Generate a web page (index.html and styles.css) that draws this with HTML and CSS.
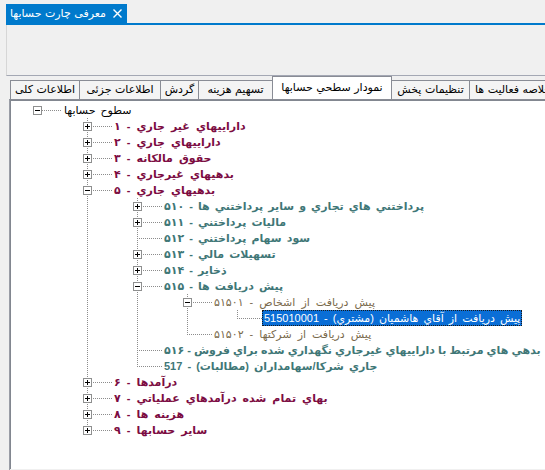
FILE: index.html
```html
<!DOCTYPE html>
<html lang="fa">
<head>
<meta charset="utf-8">
<title>معرفی چارت حسابها</title>
<link rel="stylesheet" href="styles.css">
</head>
<body>
<div class="doc-tabs">
  <div class="doc-tab">
    <span class="doc-title">معرفی چارت حسابها</span>
    <svg class="doc-close" width="9" height="9" viewBox="0 0 9 9"><path d="M0.5 0.5 L8.5 8.5 M8.5 0.5 L0.5 8.5" stroke="#fff" stroke-width="1.4" fill="none"/></svg>
  </div>
</div>
<div class="doc-line"></div>
<div class="doc-body"></div>

<div class="tabs">
  <div class="tab t1">اطلاعات کلی</div>
  <div class="tab t2">اطلاعات جزئی</div>
  <div class="tab t3">گردش</div>
  <div class="tab t4">تسهیم هزینه</div>
  <div class="tab active">نمودار سطحي حسابها</div>
  <div class="tab t6">تنظیمات پخش</div>
  <div class="tab">خلاصه فعالیت ها</div>
</div>

<div class="page">
  <div class="tree">
    <div class="row"><span class="col own root"><span class="box"></span></span><span class="lbl c0">سطوح حسابها</span></div>

    <div class="row"><span class="col"></span><span class="col own v"><span class="box plus"></span></span><span class="lbl c1">۱ - داراييهاي غير جاري</span></div>
    <div class="row"><span class="col"></span><span class="col own v"><span class="box plus"></span></span><span class="lbl c1">۲ - داراييهاي جاري</span></div>
    <div class="row"><span class="col"></span><span class="col own v"><span class="box plus"></span></span><span class="lbl c1">۳ - حقوق مالکانه</span></div>
    <div class="row"><span class="col"></span><span class="col own v"><span class="box plus"></span></span><span class="lbl c1">۴ - بدهيهاي غيرجاري</span></div>
    <div class="row"><span class="col"></span><span class="col own v"><span class="box"></span></span><span class="lbl c1">۵ - بدهيهاي جاري</span></div>

    <div class="row"><span class="col"></span><span class="col v"></span><span class="col own v"><span class="box plus"></span></span><span class="lbl c2">۵۱۰ - پرداختني هاي تجاري و ساير پرداختني ها</span></div>
    <div class="row"><span class="col"></span><span class="col v"></span><span class="col own v"><span class="box plus"></span></span><span class="lbl c2">۵۱۱ - ماليات پرداختني</span></div>
    <div class="row"><span class="col"></span><span class="col v"></span><span class="col own v"></span><span class="lbl c2">۵۱۲ - سود سهام پرداختني</span></div>
    <div class="row"><span class="col"></span><span class="col v"></span><span class="col own v"><span class="box plus"></span></span><span class="lbl c2">۵۱۳ - تسهيلات مالي</span></div>
    <div class="row"><span class="col"></span><span class="col v"></span><span class="col own v"><span class="box plus"></span></span><span class="lbl c2">۵۱۴ - ذخاير</span></div>
    <div class="row"><span class="col"></span><span class="col v"></span><span class="col own v"><span class="box"></span></span><span class="lbl c2">۵۱۵ - پيش دريافت ها</span></div>

    <div class="row"><span class="col"></span><span class="col v"></span><span class="col v"></span><span class="col own v"><span class="box"></span></span><span class="lbl c3">۵۱۵۰۱ - پيش دريافت از اشخاص</span></div>
    <div class="row"><span class="col"></span><span class="col v"></span><span class="col v"></span><span class="col v"></span><span class="col own half"></span><span class="lbl hl">515010001 - پيش دريافت از آقاي هاشميان (مشتري)</span></div>
    <div class="row"><span class="col"></span><span class="col v"></span><span class="col v"></span><span class="col own half"></span><span class="lbl c3">۵۱۵۰۲ - پيش دريافت از شرکتها</span></div>

    <div class="row"><span class="col"></span><span class="col v"></span><span class="col own v"></span><span class="lbl c2 long">۵۱۶ - بدهي هاي مرتبط با داراييهاي غيرجاري نگهداري شده براي فروش</span></div>
    <div class="row"><span class="col"></span><span class="col v"></span><span class="col own half"></span><span class="lbl c2">517 - جاري شرکا/سهامداران (مطالبات)</span></div>

    <div class="row"><span class="col"></span><span class="col own v"><span class="box plus"></span></span><span class="lbl c1">۶ - درآمدها</span></div>
    <div class="row"><span class="col"></span><span class="col own v"><span class="box plus"></span></span><span class="lbl c1">۷ - بهاي تمام شده درآمدهاي عملياتي</span></div>
    <div class="row"><span class="col"></span><span class="col own v"><span class="box plus"></span></span><span class="lbl c1">۸ - هزينه ها</span></div>
    <div class="row"><span class="col"></span><span class="col own half"><span class="box plus"></span></span><span class="lbl c1">۹ - ساير حسابها</span></div>
  </div>
</div>
</body>
</html>
```

FILE: styles.css
```css
html, body {
  margin: 0;
  padding: 0;
}
body {
  width: 545px;
  height: 470px;
  overflow: hidden;
  background: #f0f0f0;
  font-family: "DejaVu Sans", sans-serif;
  font-size: 11px;
  direction: ltr;
}

/* document tab */
.doc-tabs {
  height: 23px;
  padding-left: 6px;
  display: flex;
  align-items: flex-end;
}
.doc-tab {
  width: 121px;
  height: 19px;
  box-sizing: border-box;
  background: #007acc;
  color: #fff;
  display: flex;
  align-items: center;
  justify-content: space-between;
  padding: 0 5px 0 4px;
  font-size: 11px;
}
.doc-title {
  direction: rtl;
  line-height: 19px;
}
.doc-close {
  display: block;
  flex: none;
}
.doc-line {
  height: 2px;
  margin-left: 6px;
  background: #007acc;
}
.doc-body {
  height: 50px;
  margin-left: 6px;
  border-left: 1px solid #d6d6d6;
  border-bottom: 1px solid #a4a8b4;
}

/* tab strip */
.tabs {
  display: flex;
  align-items: flex-end;
  height: 23px;
  padding-left: 10px;
  white-space: nowrap;
  overflow: hidden;
}
.tab {
  flex: none;
  height: 19px;
  box-sizing: border-box;
  border: 1px solid #898c95;
  border-bottom: none;
  background: #f4f4f4;
  padding: 0 5px;
  margin-right: -1px;
  line-height: 18px;
  color: #000;
  direction: rtl;
  text-align: center;
}
.t1 { width: 70px; padding: 0; }
.t2 { width: 82px; padding: 0; }
.t3 { width: 39px; padding: 0; }
.t4 { width: 75px; padding: 0; }
.t6 { width: 79px; padding: 0; }
.tab.active {
  width: 120px;
  height: 23px;
  padding: 0;
  background: #fff;
  line-height: 21px;
}

/* tab page */
.page {
  margin-left: 9px;
  border-left: 1px solid #9a9da6;
  border-top: 1px solid #898c95;
  height: 370px;
}
.tree {
  height: 369px;
  background: #fff;
  border-left: 1px solid #828790;
  border-top: 1px solid #828790;
  padding: 1px 0 0 1px;
  box-sizing: border-box;
  overflow: hidden;
}

.row {
  display: flex;
  height: 16px;
  white-space: nowrap;
}
.col {
  flex: none;
  width: 50px;
  height: 16px;
  position: relative;
}
.col.v::before,
.col.half::before {
  content: "";
  position: absolute;
  left: 25px;
  top: 0;
  width: 1px;
  height: 16px;
  background: linear-gradient(#8c8c8c 50%, transparent 50%) 0 0 / 1px 2px repeat-y;
}
.col.half::before {
  height: 9px;
}
.col.own::after {
  content: "";
  position: absolute;
  left: 25px;
  right: 0;
  top: 8px;
  height: 1px;
  background: linear-gradient(to right, #8c8c8c 50%, transparent 50%) 0 0 / 2px 1px repeat-x;
}
.col.root::after {
  left: 30px;
}
.box {
  position: absolute;
  left: 21px;
  top: 4px;
  width: 9px;
  height: 9px;
  box-sizing: border-box;
  border: 1px solid #8e8f8f;
  background: #fff;
  z-index: 1;
}
.box::before {
  content: "";
  position: absolute;
  left: 1px;
  top: 3px;
  width: 5px;
  height: 1px;
  background: #000;
}
.box.plus::after {
  content: "";
  position: absolute;
  left: 3px;
  top: 1px;
  width: 1px;
  height: 5px;
  background: #000;
}

.lbl {
  display: block;
  flex: none;
  height: 16px;
  line-height: 16px;
  padding: 0 2px;
  font-family: "Liberation Sans", "DejaVu Sans", sans-serif;
  font-size: 11px;
  word-spacing: 2px;
  box-sizing: border-box;
}
.c0 { color: #000; }
.c1 { color: #7c0c42; font-weight: bold; word-spacing: 3px; }
.c2 { color: #3f7777; font-weight: bold; }
.c3 { color: #7a6a4c; word-spacing: 3px; }
.long { word-spacing: 0; }
.hl {
  background: #0a6ed6;
  color: #fff;
  outline: 1px dotted #1a1a1a;
  outline-offset: -1px;
}
```
